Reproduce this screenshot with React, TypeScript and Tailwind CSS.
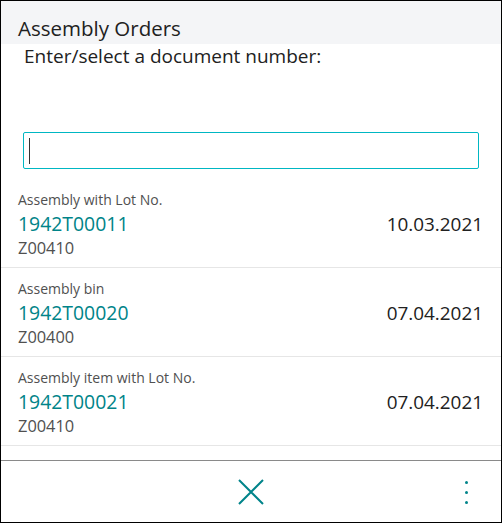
import React from "react";

const orders = [
  { desc: "Assembly with Lot No.", no: "1942T00011", item: "Z00410", date: "10.03.2021" },
  { desc: "Assembly bin", no: "1942T00020", item: "Z00400", date: "07.04.2021" },
  { desc: "Assembly item with Lot No.", no: "1942T00021", item: "Z00410", date: "07.04.2021" },
];

export default function App() {
  return (
    <div
      className="flex h-[523px] w-[502px] flex-col overflow-hidden border border-black bg-white text-[#212121]"
      style={{ fontFamily: '"Open Sans", "Noto Sans", sans-serif' }}
    >
      <div className="flex h-[43px] shrink-0 items-center bg-[#f4f5f7] px-[17px] pt-[11px] text-[20.5px]">
        Assembly Orders
      </div>
      <div className="px-[23px] text-[19px] leading-[24px]">
        Enter/select a document number:
      </div>

      <div className="mx-[22px] mt-[64px] flex h-[37px] shrink-0 items-center rounded-[2px] border border-[#00b7c3] px-[5px]">
        <div className="h-[26px] w-px bg-[#333]" />
      </div>

      <div className="mt-[10px] flex-1">
        {orders.map(o => (
          <div key={o.no} className="flex h-[89px] items-center border-b border-[#e6e6e6] pl-[17px] pr-[18px]">
            <div className="flex-1 pt-[2px]">
              <div className="text-[14px] leading-[20px] text-[#505050]">{o.desc}</div>
              <div className="text-[19.4px] leading-[28px] text-[#008489]">{o.no}</div>
              <div className="text-[16.4px] leading-[20px] text-[#505050]">{o.item}</div>
            </div>
            <div className="pt-[2px] text-[18.9px] text-[#212121]">{o.date}</div>
          </div>
        ))}
      </div>

      <div className="relative flex h-[62px] shrink-0 items-center justify-center border-t border-[#8a8a8a]">
        <svg width="28" height="28" viewBox="0 0 28 28" className="text-[#00848a]">
          <path d="M2 2L26 26M26 2L2 26" stroke="currentColor" strokeWidth="2" fill="none" />
        </svg>
        <div className="absolute right-[33px] top-[20px] flex flex-col gap-[7px]">
          <div className="h-[3px] w-[3px] rounded-full bg-[#00848a]" />
          <div className="h-[3px] w-[3px] rounded-full bg-[#00848a]" />
          <div className="h-[3px] w-[3px] rounded-full bg-[#00848a]" />
        </div>
      </div>
    </div>
  );
}
